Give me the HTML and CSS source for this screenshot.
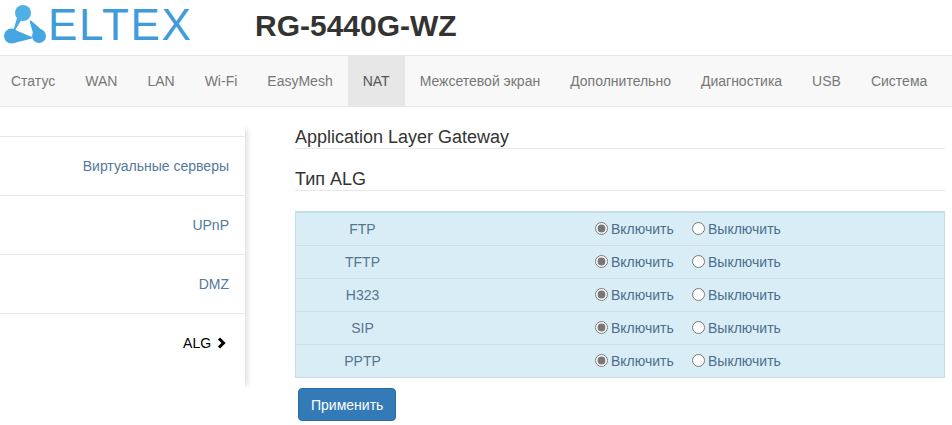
FILE: index.html
```html
<!DOCTYPE html>
<html lang="ru">
<head>
  <meta charset="UTF-8">
  <title>RG-5440G-WZ</title>
  <link rel="stylesheet" href="styles.css">
</head>
<body>

  <header class="top">
    <div class="logo">
      <svg class="logo-icon" width="46" height="46" viewBox="0 0 46 46">
        <circle cx="23" cy="13" r="8" fill="#4fb0e6"></circle>
        <path d="M17 18 L13.5 30 L15 30.5 L21 20.5 Z" fill="#4fa8e0"></path>
        <circle cx="11.5" cy="36" r="7.5" fill="#45a6e2"></circle>
        <path d="M15 30 L32 37 L32 38.5 L14 43 Z" fill="#45a6e2"></path>
        <circle cx="39" cy="36" r="7" fill="#45a6e2"></circle>
        <path d="M33 33 L29.5 21 L31 20.5 L43 31 Z" fill="#45a6e2"></path>
      </svg>
      <span class="logo-text">ELTEX</span>
    </div>
    <h1>RG-5440G-WZ</h1>
  </header>

  <nav class="menu">
    <a href="#">Статус</a>
    <a href="#">WAN</a>
    <a href="#">LAN</a>
    <a href="#">Wi-Fi</a>
    <a href="#">EasyMesh</a>
    <a href="#" class="active">NAT</a>
    <a href="#">Межсетевой экран</a>
    <a href="#">Дополнительно</a>
    <a href="#">Диагностика</a>
    <a href="#">USB</a>
    <a href="#">Система</a>
  </nav>

  <div class="page">
    <aside class="side">
      <a href="#">Виртуальные серверы</a>
      <a href="#">UPnP</a>
      <a href="#">DMZ</a>
      <a href="#" class="current">ALG
        <svg class="chevron" width="10" height="12" viewBox="0 0 10 12">
          <path d="M2 1.5 L6.5 6 L2 10.5" fill="none" stroke="#000" stroke-width="3"></path>
        </svg>
      </a>
    </aside>

    <main class="content">
      <h2>Application Layer Gateway</h2>
      <h2>Тип ALG</h2>

      <div class="alg">
        <div class="row">
          <span class="name">FTP</span>
          <label class="on"><input type="radio" name="ftp" checked>Включить</label>
          <label><input type="radio" name="ftp">Выключить</label>
        </div>
        <div class="row">
          <span class="name">TFTP</span>
          <label class="on"><input type="radio" name="tftp" checked>Включить</label>
          <label><input type="radio" name="tftp">Выключить</label>
        </div>
        <div class="row">
          <span class="name">H323</span>
          <label class="on"><input type="radio" name="h323" checked>Включить</label>
          <label><input type="radio" name="h323">Выключить</label>
        </div>
        <div class="row">
          <span class="name">SIP</span>
          <label class="on"><input type="radio" name="sip" checked>Включить</label>
          <label><input type="radio" name="sip">Выключить</label>
        </div>
        <div class="row">
          <span class="name">PPTP</span>
          <label class="on"><input type="radio" name="pptp" checked>Включить</label>
          <label><input type="radio" name="pptp">Выключить</label>
        </div>
      </div>

      <button class="apply">Применить</button>
    </main>
  </div>

</body>
</html>
```

FILE: styles.css
```css
body {
  font-family: "Liberation Sans", Arial, sans-serif;
  font-size: 14px;
  line-height: 20px;
  color: #333;
  background: #fff;
  margin: 0;
  padding: 0;
}
.top {
  display: flex;
  align-items: center;
  height: 55px;
}
.logo {
  display: flex;
  align-items: flex-start;
  width: 255px;
  height: 55px;
  flex: none;
}
.logo-icon {
  flex: none;
}
.logo-text {
  font-size: 44px;
  line-height: 50px;
  letter-spacing: 1.7px;
  color: #3f9cda;
  margin-left: 2px;
}
h1 {
  font-size: 30px;
  line-height: 36px;
  margin: 0 0 4px;
  color: #333;
}
.menu {
  display: flex;
  height: 50px;
  padding-left: 0;
  background: #f8f8f8;
  border-top: 1px solid #e7e7e7;
  border-bottom: 1px solid #e7e7e7;
  margin-left: -4px;
}
.menu a {
  padding: 15px;
  color: #777;
  text-decoration: none;
}
.menu a.active {
  background: #e7e7e7;
  color: #555;
}
.page {
  display: flex;
  align-items: flex-start;
}
.side {
  width: 245px;
  flex: none;
  margin-top: 20px;
  padding: 9px 0 15px;
  box-shadow: 4px 0 6px -2px rgba(0, 0, 0, 0.15);
  clip-path: inset(0 -12px 0 0);
  box-sizing: border-box;
  height: 261px;
}
.side a {
  display: block;
  height: 58px;
  line-height: 58px;
  padding-right: 16px;
  text-align: right;
  color: #55789b;
  text-decoration: none;
  border-top: 1px solid #e7e7e7;
}
.side a.current {
  color: #000;
  padding-right: 18px;
}
.chevron {
  margin-left: 2px;
  vertical-align: -1px;
}
.content {
  flex: 1;
  margin: 0 7px 0 50px;
}
h2 {
  font-size: 18px;
  font-weight: 500;
  line-height: 22px;
  margin: 0 0 19px;
  color: #333;
  border-bottom: 1px solid #e7e7e7;
}
.content h2:first-child {
  margin-top: 19px;
  padding-bottom: 0;
}
.alg {
  margin-top: 20px;
  background: #d9edf7;
  border: 1px solid #c5dde6;
  border-top-width: 2px;
}
.row {
  display: flex;
  align-items: center;
  height: 32px;
  color: #4a6f8a;
  border-top: 1px solid #c9e0e8;
}
.row:first-child {
  border-top: 0;
}
.name {
  width: 133px;
  text-align: center;
  color: #56758a;
}
.row label {
  display: flex;
  align-items: center;
}
.row label.on {
  margin-left: 166px;
  width: 97px;
}
.row input {
  margin: 0 3px 2px 0;
  accent-color: #777;
}
.apply {
  display: block;
  margin: 10px 0 0 3px;
  height: 33px;
  padding: 0 12px;
  font-family: inherit;
  font-size: 14px;
  color: #fff;
  background: #337ab7;
  border: 1px solid #2e6da4;
  border-radius: 4px;
}
```
